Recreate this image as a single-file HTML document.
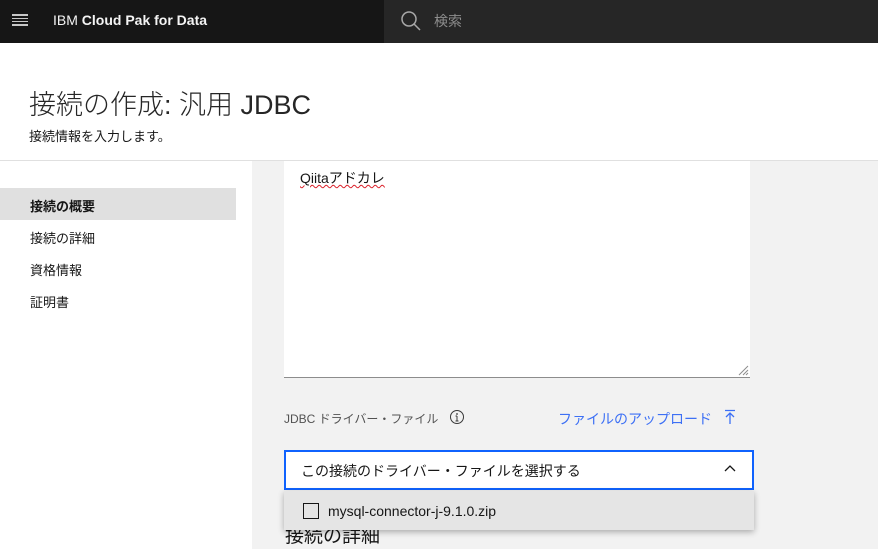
<!DOCTYPE html>
<html><head><meta charset="utf-8"><style>
*{margin:0;padding:0;box-sizing:border-box}
body{width:878px;height:549px;overflow:hidden;background:#fff;font-family:"Liberation Sans","Noto Sans CJK JP",sans-serif;color:#161616;position:relative}
.hdr{position:absolute;left:0;top:0;width:878px;height:43px;background:#161616}
.srch{position:absolute;left:384px;top:0;width:494px;height:43px;background:#262626}
.t{position:absolute;white-space:nowrap}
</style></head><body>
<div class="hdr"></div>
<div class="srch"></div>
<div style="position:absolute;left:12px;top:14px;width:16px;height:12px;border-top:2px solid #c6c6c6;border-bottom:2px solid #c6c6c6"></div>
<div style="position:absolute;left:12px;top:18px;width:16px;height:4px;border-top:1px solid #c6c6c6;border-bottom:1px solid #c6c6c6"></div>
<div class="t" style="left:53px;top:12px;font-size:14px;color:#f4f4f4">IBM <b>Cloud Pak for Data</b></div>
<svg style="position:absolute;left:400px;top:10px" width="22" height="22" viewBox="0 0 22 22"><circle cx="9" cy="9" r="7" fill="none" stroke="#a8a8a8" stroke-width="1.5"/><line x1="14" y1="14" x2="20" y2="20" stroke="#a8a8a8" stroke-width="1.5"/></svg>
<div class="t" style="left:434px;top:11px;font-size:14px;color:#8d8d8d">検索</div>
<div class="t" style="left:29px;top:83px;font-size:27px;font-weight:300;color:#262626">接続の作成: 汎用 JDBC</div>
<div class="t" style="left:29px;top:126px;font-size:13px">接続情報を入力します。</div>
<div style="position:absolute;left:0;top:160px;width:878px;height:1px;background:#e0e0e0"></div>
<div style="position:absolute;left:252px;top:161px;width:626px;height:388px;background:#f2f2f2"></div>
<div style="position:absolute;left:0;top:188px;width:236px;height:32px;background:#e0e0e0"></div>
<div class="t" style="left:30px;top:196px;font-size:13px;font-weight:bold">接続の概要</div>
<div class="t" style="left:30px;top:228px;font-size:13px">接続の詳細</div>
<div class="t" style="left:30px;top:260px;font-size:13px">資格情報</div>
<div class="t" style="left:30px;top:292px;font-size:13px">証明書</div>
<div style="position:absolute;left:284px;top:161px;width:466px;height:217px;background:#fff;border-bottom:1px solid #8d8d8d"></div>
<div class="t" style="left:300px;top:168px;font-size:14px;text-decoration:underline wavy #da1e28;text-decoration-thickness:1px">Qiitaアドカレ</div>
<svg style="position:absolute;left:737px;top:364px" width="12" height="12"><path d="M11 2L2 11M11 6L6 11M11 9L9 11" stroke="#8d8d8d"/></svg>
<div class="t" style="left:284px;top:410px;font-size:12px;color:#525252">JDBC ドライバー・ファイル</div>
<svg style="position:absolute;left:449px;top:409px" width="16" height="16"><circle cx="8" cy="8" r="6.5" fill="none" stroke="#393939"/><path d="M8 7v5M6.5 12h3M6.5 7h1.5" stroke="#393939"/><circle cx="8" cy="5" r="0.9" fill="#393939"/></svg>
<div class="t" style="left:558px;top:409px;font-size:14px;color:#3d70f5">ファイルのアップロード</div>
<svg style="position:absolute;left:723px;top:409px" width="14" height="16"><path d="M2 1.5h10M7 4v11M3 8l4-4 4 4" fill="none" stroke="#3d70f5" stroke-width="1.3"/></svg>
<div style="position:absolute;left:284px;top:450px;width:470px;height:40px;background:#fff;border:2px solid #0f62fe"></div>
<div class="t" style="left:301px;top:461px;font-size:14px">この接続のドライバー・ファイルを選択する</div>
<svg style="position:absolute;left:723px;top:464px" width="14" height="10"><path d="M2 7l5-5 5 5" fill="none" stroke="#161616" stroke-width="1.3"/></svg>
<div class="t" style="left:285px;top:521px;font-size:19px">接続の詳細</div>
<div style="position:absolute;left:284px;top:491px;width:470px;height:39px;background:#e5e5e5;box-shadow:0 2px 6px rgba(0,0,0,.3)"></div>
<div style="position:absolute;left:303px;top:503px;width:16px;height:16px;border:1px solid #161616"></div>
<div class="t" style="left:328px;top:503px;font-size:14px">mysql-connector-j-9.1.0.zip</div>
</body></html>
